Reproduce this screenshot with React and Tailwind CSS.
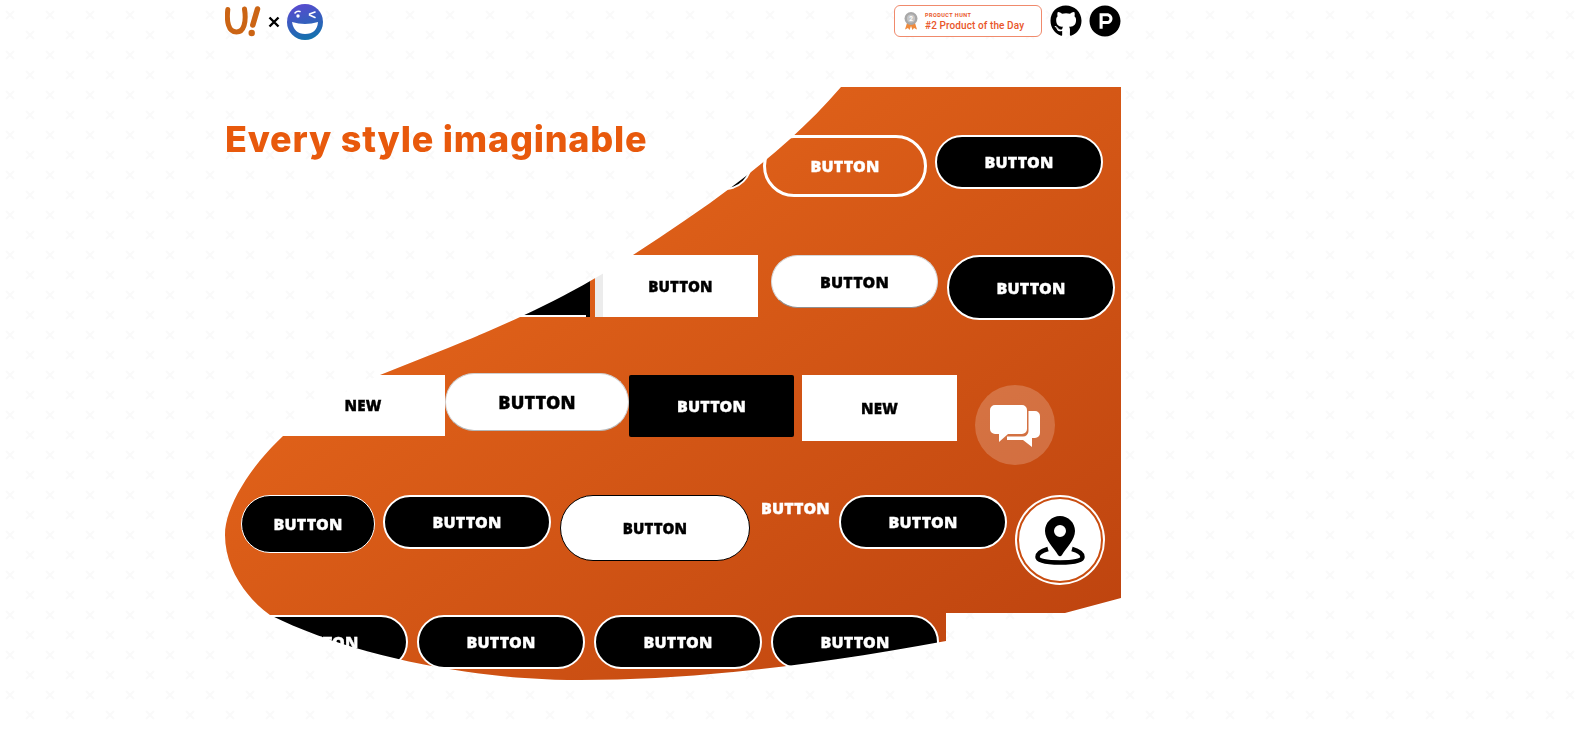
import React from 'react';
import { FaGithub, FaProductHunt } from 'react-icons/fa';

const label = "font-['Noto_Sans',sans-serif] font-black tracking-[0.15px] leading-none [-webkit-text-stroke:0.35px_currentColor]";

const Btn = ({ className, text = 'BUTTON', size = 'text-[16px]' }) => (
  <div className={`relative flex shrink-0 items-center justify-center ${className}`}>
    <span className={`${label} ${size}`}>{text}</span>
  </div>
);

const blackPill = 'w-[168px] h-[54px] rounded-[27px] bg-black text-white border-2 border-white';

const Logo = () => (
  <div className="flex items-center">
    <svg width="36" height="36" viewBox="0 0 36 36" className="-mt-[2px]">
      <path d="M2.8 6.5 C1.5 18 3 29 11.5 29 C19 29 21.5 19 19.5 6" fill="none" stroke="#cb6414" strokeWidth="5" strokeLinecap="round" />
      <path d="M32.5 6 L27.8 22" fill="none" stroke="#cb6414" strokeWidth="5.5" strokeLinecap="round" />
      <circle cx="26.7" cy="30" r="3.2" fill="#cb6414" />
    </svg>
    <svg width="12" height="12" viewBox="0 0 12 12" className="ml-[7px] mr-[7px]">
      <path d="M1.5 1.5 L10.5 10.5 M10.5 1.5 L1.5 10.5" stroke="#000" strokeWidth="2.4" />
    </svg>
    <svg width="36" height="36" viewBox="0 0 36 36">
      <defs>
        <linearGradient id="face" x1="0.3" y1="0" x2="0.6" y2="1">
          <stop offset="0" stopColor="#5a4ad0" />
          <stop offset="1" stopColor="#1272ac" />
        </linearGradient>
      </defs>
      <circle cx="18" cy="18" r="18" fill="url(#face)" />
      <path d="M8 9 Q10 6.5 13 7.5" fill="none" stroke="#fff" strokeWidth="1.6" strokeLinecap="round" />
      <circle cx="11" cy="12" r="1.7" fill="#fff" />
      <path d="M22.5 10 L28 8 M22.5 11 L28 13.5" fill="none" stroke="#fff" strokeWidth="1.6" strokeLinecap="round" />
      <path d="M5 18 Q18 22 31 18 Q30 30 18 30 Q7 30 5 18 Z" fill="#fff" />
    </svg>
  </div>
);

const Medal = () => (
  <svg width="14" height="18" viewBox="0 0 14 18" className="shrink-0">
    <path d="M3 11 L1 17.5 L4 16 L5.5 18 L7 14 L8.5 18 L10 16 L13 17.5 L11 11 Z" fill="#ef8a3c" />
    <circle cx="7" cy="6.5" r="6.5" fill="#a8a8a8" />
    <circle cx="7" cy="6.5" r="4" fill="#c6c6c6" />
    <text x="7" y="9" textAnchor="middle" fontSize="6.5" fontWeight="700" fill="#fff" fontFamily="Roboto">2</text>
  </svg>
);

const Badge = () => (
  <div className="flex h-[32px] w-[148px] items-center rounded-[6px] border border-[#f08a6c] bg-white pl-[9px] font-['Roboto',sans-serif] text-[#e9562a]">
    <Medal />
    <div className="ml-[7px] flex flex-col pt-[1px]">
      <span className="text-[5.5px] font-bold leading-[8px] tracking-[0.45px]">PRODUCT HUNT</span>
      <span className="text-[10px] font-medium leading-[13px] tracking-[0.1px]">#2 Product of the Day</span>
    </div>
  </div>
);

const ChatIcon = () => (
  <svg width="50" height="42" viewBox="0 0 50 42" fill="#fff">
    <path d="M5 0 H32 A5 5 0 0 1 37 5 V24 A5 5 0 0 1 32 29 H18 L9 37 V29 H5 A5 5 0 0 1 0 24 V5 A5 5 0 0 1 5 0 Z" />
    <path d="M38.5 6 H45 A5 5 0 0 1 50 11 V28 A5 5 0 0 1 45 33 H42 V42 L33 35 H17 V31.5 H33 A5.5 5.5 0 0 0 38.5 26 Z" />
  </svg>
);

const PinIcon = () => (
  <svg width="50" height="49" viewBox="0 0 50 49">
    <path fillRule="evenodd" d="M25 0 C16.7 0 10 6.7 10 15 C10 24 19 32 23 39 Q25 41.5 27 39 C31 32 40 24 40 15 C40 6.7 33.3 0 25 0 Z M25 9 A6 6 0 1 1 25 21 A6 6 0 1 1 25 9 Z" fill="#000" />
    <path d="M13 33 C6 35 2.5 37.5 2.5 41 C2.5 45 12 46.5 25 46.5 C38 46.5 47.5 45 47.5 41 C47.5 37.5 44 35 37 33" fill="none" stroke="#000" strokeWidth="4.5" />
  </svg>
);

export default function App() {
  return (
    <div className="relative min-h-screen overflow-hidden bg-white">
      <svg className="absolute inset-0 h-full w-full">
        <defs>
          <pattern id="crosses" width="40" height="40" patternUnits="userSpaceOnUse">
            <path d="M26 31 L34 39 M34 31 L26 39 M6 11 L14 19 M14 11 L6 19" stroke="#fafafa" strokeWidth="2" />
          </pattern>
        </defs>
        <rect width="100%" height="100%" fill="url(#crosses)" />
      </svg>

      <div className="relative ml-[225px] w-[896px]">
        <header className="flex h-[87px] items-start justify-between pt-[4px]">
          <Logo />
          <div className="flex items-center pt-[1px]">
            <Badge />
            <FaGithub className="ml-[8px] text-[32px] text-black" />
            <FaProductHunt className="ml-[7px] text-[32px] text-black" />
          </div>
        </header>

        <section className="relative">
          <div className="h-[610px] bg-linear-to-br from-[#e2631a] from-25% to-[#bb410e] pt-[48px] will-change-transform [clip-path:path('M616_0_L896_0_L896_511_L840_526_L721_526_L721_554_C590_578_470_593_355_593_C250_593_130_570_45_528_C20_510_0_480_0_448_C0_420_25_380_58_349_C85_325_120_303_155_288_C245_252_320_225_408_168_C490_115_560_65_616_0_Z')]">
            {/* row 1 */}
            <div className="flex h-[120px] items-start pl-[359px]">
              <Btn className={`${blackPill} mt-[1px]`} />
              <Btn className="ml-[11px] h-[62px] w-[164px] rounded-[31px] border-[3px] border-white text-white" />
              <Btn className={`${blackPill} ml-[8px]`} />
            </div>
            {/* row 2 */}
            <div className="flex h-[120px] items-start pl-[200px]">
              <Btn className="h-[62px] w-[165px] bg-black text-white" />
              <div className="absolute left-[200px] top-[228px] h-[2px] w-[161px] bg-white" />
              <Btn className="ml-[5px] h-[62px] w-[163px] border-l-[8px] border-[#ececec] bg-white text-black" size="text-[15px]" />
              <Btn className="ml-[13px] h-[53px] w-[167px] rounded-[27px] border border-[#d6d6d6] border-b-[#909090] bg-white text-black" />
              <Btn className={`${blackPill} ml-[9px] h-[65px] rounded-[33px]`} />
            </div>
            {/* row 3 */}
            <div className="flex h-[120px] items-start pl-[56px]">
              <Btn className="h-[61px] w-[164px] bg-white text-black" size="text-[15px]" text="NEW" />
              <Btn className="-mt-[2px] h-[58px] w-[184px] rounded-[29px] border border-[#cfcfcf] border-b-[#b5b5b5] bg-white text-black" size="text-[18px]" />
              <Btn className="h-[62px] w-[165px] rounded-[2px] bg-black text-white" />
              <Btn className="ml-[8px] h-[66px] w-[155px] bg-white text-black" size="text-[15px]" text="NEW" />
              <div className="ml-[18px] mt-[10px] flex h-[80px] w-[80px] items-center justify-center rounded-full bg-white/20 pt-[1px]">
                <ChatIcon />
              </div>
            </div>
            {/* row 4 */}
            <div className="flex h-[120px] items-start pl-[16px]">
              <Btn className="h-[58px] w-[134px] rounded-[29px] border border-white bg-black text-white" />
              <Btn className={`${blackPill} ml-[8px]`} />
              <Btn className="ml-[9px] h-[66px] w-[190px] rounded-[33px] border border-black bg-white text-black" size="text-[15px]" />
              <span className={`${label} ml-[11px] mt-[5px] w-[68px] whitespace-nowrap text-[16px] text-white`}>BUTTON</span>
              <Btn className={`${blackPill} ml-[10px]`} />
              <div className="ml-[8px] h-[90px] w-[90px] rounded-full bg-white p-[2px]">
                <div className="flex h-full w-full items-center justify-center rounded-full border-2 border-[#c94d10] bg-white">
                  <PinIcon />
                </div>
              </div>
            </div>
            {/* row 5 */}
            <div className="flex h-[120px] items-start pl-[15px]">
              <Btn className={blackPill} />
              <Btn className={`${blackPill} ml-[9px]`} />
              <Btn className={`${blackPill} ml-[9px]`} />
              <Btn className={`${blackPill} ml-[9px]`} />
            </div>
          </div>

          <h1 className="absolute left-0 top-[28px] font-['Inter',sans-serif] text-[36px] font-extrabold leading-[48px] tracking-[0.8px] text-[#e8590c]">
            Every style imaginable
          </h1>
        </section>
      </div>
    </div>
  );
}
